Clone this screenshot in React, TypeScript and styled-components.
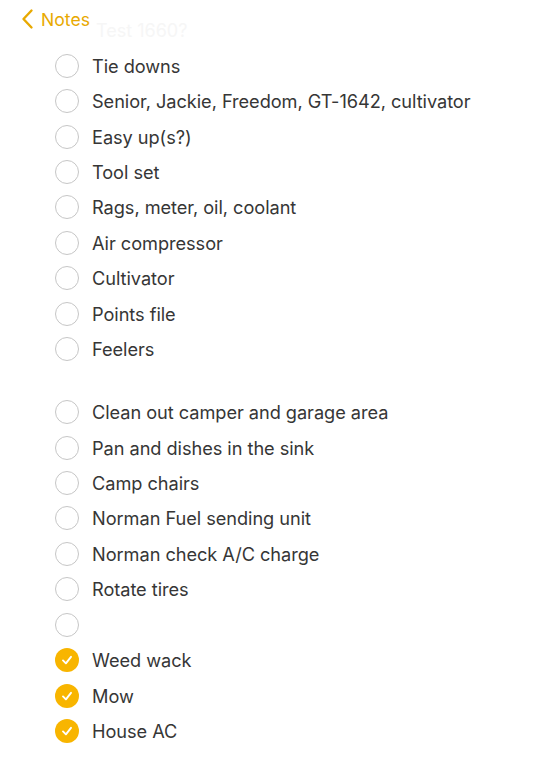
import React from 'react';
import styled, { createGlobalStyle } from 'styled-components';

const GlobalStyle = createGlobalStyle`
  html, body {
    margin: 0;
    padding: 0;
    background: #fff;
  }
  body {
    font-family: "Inter", "Noto Sans", sans-serif;
    -webkit-font-smoothing: antialiased;
  }
`;

const Page = styled.div`
  width: 559px;
  height: 768px;
  background: #fff;
  position: relative;
  overflow: hidden;
`;

const TopBar = styled.div`
  height: 48px;
  position: relative;
`;

const BackButton = styled.div`
  position: absolute;
  left: 21px;
  top: 8px;
  display: flex;
  align-items: center;
  gap: 7px;
  color: #e8a900;
  font-size: 17.6px;
  z-index: 2;
`;

const GhostTitle = styled.div`
  position: absolute;
  left: 96px;
  top: 20px;
  color: #f6f6f6;
  font-size: 18px;
`;

const List = styled.ul`
  list-style: none;
  margin: 0;
  padding: 0 0 0 55px;
`;

const Row = styled.li`
  height: 35.45px;
  display: flex;
  align-items: center;
  gap: 13px;
`;

const Spacer = styled.li`
  height: 27.5px;
`;

const Circle = styled.span<{ $done?: boolean }>`
  width: 24px;
  height: 24px;
  box-sizing: border-box;
  border-radius: 50%;
  flex: none;
  display: flex;
  align-items: center;
  justify-content: center;
  border: ${(p) => (p.$done ? 'none' : '1.3px solid #c6c6c6')};
  background: ${(p) => (p.$done ? '#f8b500' : 'transparent')};
`;

const Label = styled.span`
  font-size: 18.2px;
  color: #363636;
  letter-spacing: -0.05px;
  white-space: nowrap;
`;

const Check = () => (
  <svg width="14" height="14" viewBox="0 0 14 14">
    <path d="M3 7.4 L5.9 10.3 L11 3.8" fill="none" stroke="#fff" strokeWidth="1.9" strokeLinecap="round" strokeLinejoin="round" />
  </svg>
);

type Item = { text: string; done?: boolean } | null;

const items: Item[] = [
  { text: 'Tie downs' },
  { text: 'Senior, Jackie, Freedom, GT-1642, cultivator' },
  { text: 'Easy up(s?)' },
  { text: 'Tool set' },
  { text: 'Rags, meter, oil, coolant' },
  { text: 'Air compressor' },
  { text: 'Cultivator' },
  { text: 'Points file' },
  { text: 'Feelers' },
  null,
  { text: 'Clean out camper and garage area' },
  { text: 'Pan and dishes in the sink' },
  { text: 'Camp chairs' },
  { text: 'Norman Fuel sending unit' },
  { text: 'Norman check A/C charge' },
  { text: 'Rotate tires' },
  { text: '' },
  { text: 'Weed wack', done: true },
  { text: 'Mow', done: true },
  { text: 'House AC', done: true },
];

export default function App() {
  return (
    <Page>
      <GlobalStyle />
      <TopBar>
        <GhostTitle>Test 1660?</GhostTitle>
        <BackButton>
          <svg width="13" height="22" viewBox="0 0 13 22">
            <path d="M10.5 2.5 L2.5 11 L10.5 19.5" fill="none" stroke="#e8a900" strokeWidth="2.4" strokeLinecap="round" strokeLinejoin="round" />
          </svg>
          Notes
        </BackButton>
      </TopBar>
      <List>
        {items.map((it, i) =>
          it === null ? (
            <Spacer key={i} />
          ) : (
            <Row key={i}>
              <Circle $done={it.done}>{it.done && <Check />}</Circle>
              <Label>{it.text}</Label>
            </Row>
          )
        )}
      </List>
    </Page>
  );
}
